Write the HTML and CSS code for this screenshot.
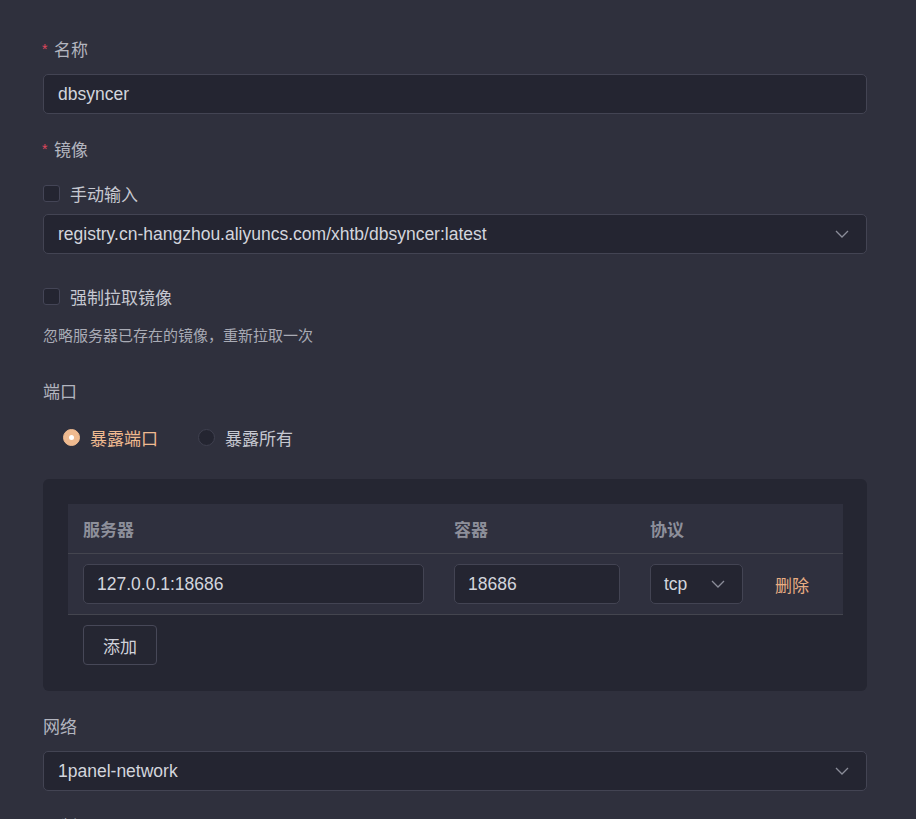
FILE: index.html
```html
<!DOCTYPE html>
<html>
<head>
<meta charset="utf-8">
<link rel="stylesheet" href="styles.css">
</head>
<body>
<div class="form">
  <div class="item">
    <div class="label"><span class="req">*</span>名称</div>
    <div class="input">dbsyncer</div>
  </div>

  <div class="item">
    <div class="label"><span class="req">*</span>镜像</div>
    <div class="check-row"><span class="checkbox"></span><span class="check-text">手动输入</span></div>
    <div class="input select">
      <span>registry.cn-hangzhou.aliyuncs.com/xhtb/dbsyncer:latest</span>
      <svg class="chev" width="14" height="8" viewBox="0 0 14 8"><path d="M1 1l6 6 6-6" fill="none" stroke="#8b8d99" stroke-width="1.3"/></svg>
    </div>
    <div class="check-row force"><span class="checkbox"></span><span class="check-text">强制拉取镜像</span></div>
    <div class="help">忽略服务器已存在的镜像，重新拉取一次</div>
  </div>

  <div class="item">
    <div class="label plain">端口</div>
    <div class="radio-row">
      <div class="radio on"><span class="dot"></span><span class="radio-text">暴露端口</span></div>
      <div class="radio"><span class="dot"></span><span class="radio-text">暴露所有</span></div>
    </div>
    <div class="card">
      <div class="table">
        <div class="tr th">
          <div class="cell">服务器</div>
          <div class="cell">容器</div>
          <div class="cell">协议</div>
          <div class="cell"></div>
        </div>
        <div class="tr td">
          <div class="cell"><div class="input small">127.0.0.1:18686</div></div>
          <div class="cell"><div class="input small w2">18686</div></div>
          <div class="cell"><div class="input small select w3"><span>tcp</span><svg class="chev" width="14" height="8" viewBox="0 0 14 8"><path d="M1 1l6 6 6-6" fill="none" stroke="#8b8d99" stroke-width="1.3"/></svg></div></div>
          <div class="cell"><span class="del">删除</span></div>
        </div>
      </div>
      <div class="btn">添加</div>
    </div>
  </div>

  <div class="item">
    <div class="label plain">网络</div>
    <div class="input select">
      <span>1panel-network</span>
      <svg class="chev" width="14" height="8" viewBox="0 0 14 8"><path d="M1 1l6 6 6-6" fill="none" stroke="#8b8d99" stroke-width="1.3"/></svg>
    </div>
  </div>

  <div class="item">
    <div class="label plain">限制</div>
  </div>
</div>
</body>
</html>
```
FILE: styles.css
```css
html, body {
  margin: 0;
  padding: 0;
  background: #2f303d;
  height: 100%;
  overflow: hidden;
}
body {
  font-family: "Liberation Sans", "Noto Sans CJK SC", sans-serif;
  font-size: 17px;
  color: #cfd1d9;
}
.form {
  width: 824px;
  padding: 37px 0 0 43px;
  display: flex;
  flex-direction: column;
}
.item {
  display: flex;
  flex-direction: column;
  margin-bottom: 23px;
}
.label {
  height: 24px;
  line-height: 20px;
  color: #b3b5bf;
  font-size: 17px;
  margin-bottom: 13px;
  display: flex;
  align-items: flex-end;
}
.label.plain { color: #b3b5bf; }
.req {
  color: #e0475c;
  font-size: 14px;
  width: 12px;
  margin-left: -1px;
  align-self: center;
}
.input {
  box-sizing: border-box;
  height: 40px;
  border: 1px solid #434453;
  border-radius: 5px;
  background: #242531;
  padding: 0 14px;
  display: flex;
  align-items: center;
  color: #d3d5dd;
  font-size: 17.5px;
}
.select { justify-content: space-between; }
.select .chev { margin-right: 3px; }
.check-row {
  height: 24px;
  display: flex;
  align-items: center;
  margin-top: 7px;
  margin-bottom: 9px;
}
.check-row.force {
  margin-top: 30px;
  margin-bottom: 18px;
}
.checkbox {
  box-sizing: border-box;
  width: 17px;
  height: 17px;
  border: 1px solid #444556;
  border-radius: 3px;
  background: #242531;
  margin-right: 10px;
}
.check-text { color: #c6c8d1; }
.help {
  font-size: 15px;
  color: #a9abb5;
  line-height: 20px;
  margin-bottom: 10px;
}
.radio-row {
  display: flex;
  height: 24px;
  align-items: center;
  padding-left: 20px;
  margin-top: 9px;
  margin-bottom: 30px;
}
.radio {
  display: flex;
  align-items: center;
  margin-right: 40px;
}
.radio .dot {
  box-sizing: border-box;
  width: 17px;
  height: 17px;
  border-radius: 50%;
  border: 1px solid #3f404f;
  background: #242531;
  margin-right: 10px;
  display: flex;
  align-items: center;
  justify-content: center;
}
.radio.on .dot {
  background: #efba90;
  border-color: #efba90;
}
.radio.on .dot::after {
  content: "";
  width: 5px;
  height: 5px;
  border-radius: 50%;
  background: #fff;
}
.radio-text { color: #c6c8d1; }
.radio.on .radio-text { color: #efba90; }
.card {
  background: #252632;
  border-radius: 6px;
  padding: 25px 24px 26px 25px;
}
.table {
  display: flex;
  flex-direction: column;
}
.tr {
  display: grid;
  grid-template-columns: 371px 196px 125px 1fr;
  background: #2f303e;
  border-bottom: 1px solid #44454f;
}
.th {
  height: 49px;
  align-items: center;
  font-weight: bold;
  color: #8d8f9a;
}
.td {
  height: 60px;
  align-items: center;
}
.cell { padding-left: 15px; }
.input.small { width: 341px; height: 40px; padding-left: 13px; }
.input.small.w2 { width: 166px; }
.input.small.w3 { width: 93px; }
.del { color: #e8ad83; }
.btn {
  box-sizing: border-box;
  margin-top: 10px;
  margin-left: 15px;
  width: 74px;
  height: 40px;
  border: 1px solid #474858;
  border-radius: 4px;
  display: flex;
  align-items: center;
  justify-content: center;
  color: #d0d2da;
}
```
